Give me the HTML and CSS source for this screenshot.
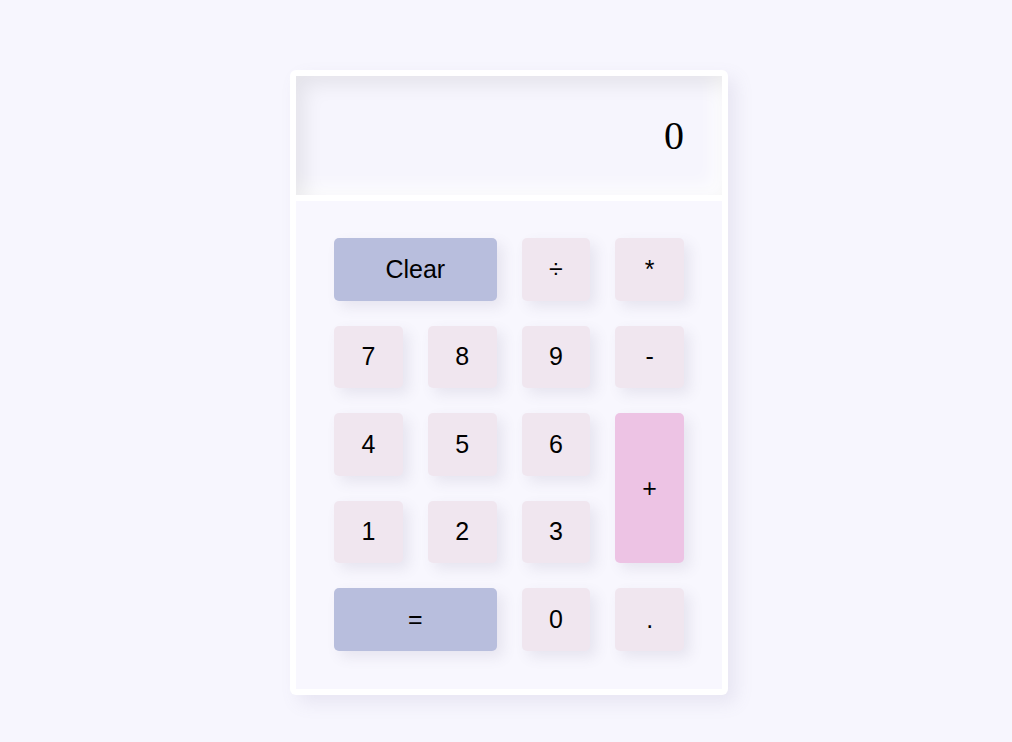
FILE: index.html
```html
<!DOCTYPE html>
<html lang="en">
<head>
<meta charset="utf-8">
<title>Calculator</title>
<link rel="stylesheet" href="styles.css">
</head>
<body>
<div class="calc">
  <div class="display">0</div>
  <div class="keys">
    <button class="key wide accent">Clear</button>
    <button class="key">÷</button>
    <button class="key">*</button>
    <button class="key">7</button>
    <button class="key">8</button>
    <button class="key">9</button>
    <button class="key">-</button>
    <button class="key">4</button>
    <button class="key">5</button>
    <button class="key">6</button>
    <button class="key tall plus">+</button>
    <button class="key">1</button>
    <button class="key">2</button>
    <button class="key">3</button>
    <button class="key wide accent">=</button>
    <button class="key">0</button>
    <button class="key">.</button>
  </div>
</div>
</body>
</html>
```
FILE: styles.css
```css
html, body {
  margin: 0;
  padding: 0;
  background: #f7f6fe;
  height: 100%;
}
body {
  font-family: "Liberation Sans", Arial, sans-serif;
}
.calc {
  box-sizing: border-box;
  width: 438px;
  margin: 70px 0 0 calc(50% - 216px);
  background: #ffffff;
  padding: 6px;
  border-radius: 6px;
  display: flex;
  flex-direction: column;
  gap: 6px;
  box-shadow: 8px 8px 18px rgba(120, 115, 160, 0.12);
}
.display {
  height: 119px;
  background: #f6f5fd;
  display: flex;
  align-items: center;
  justify-content: flex-end;
  padding-right: 38px;
  font-family: "Liberation Serif", "Times New Roman", serif;
  font-size: 40px;
  color: #000;
  box-shadow: inset 8px 8px 20px rgba(0, 0, 0, 0.08), inset -8px -8px 18px rgba(255, 255, 255, 0.9);
}
.keys {
  background: #f8f7fe;
  padding: 37px 38px 38px;
  display: grid;
  grid-template-columns: repeat(4, 1fr);
  grid-auto-rows: 62.5px;
  gap: 25px;
}
.key {
  border: none;
  margin: 0;
  padding: 0;
  border-radius: 5px;
  background: #f0e6ef;
  font-family: "Liberation Sans", Arial, sans-serif;
  font-size: 25px;
  color: #000;
  box-shadow: 6px 6px 14px rgba(90, 80, 120, 0.11);
}
.wide {
  grid-column: span 2;
}
.tall {
  grid-row: span 2;
}
.accent {
  background: #b8bedd;
}
.plus {
  background: #edc3e4;
}
```
